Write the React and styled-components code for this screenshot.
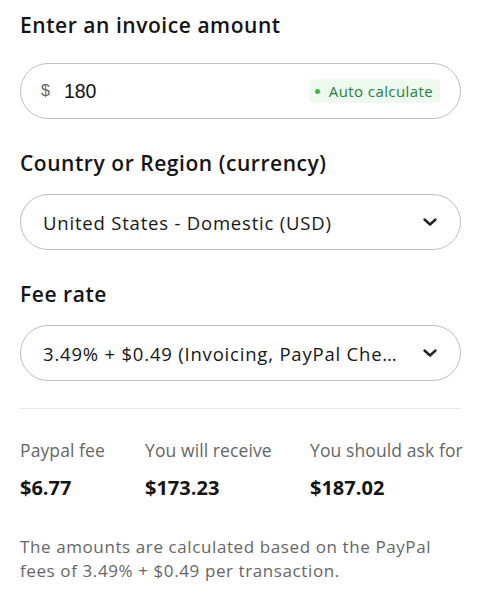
import styled, { createGlobalStyle } from "styled-components";

const GlobalStyle = createGlobalStyle`
  body {
    margin: 0;
    background: #fff;
    font-family: "Open Sans", Lato, sans-serif;
    color: #141414;
  }
`;

const Page = styled.main`
  width: 488px;
  padding: 11px 27px 0 20px;
  box-sizing: border-box;
  display: flex;
  flex-direction: column;
`;

const Field = styled.section`
  display: flex;
  flex-direction: column;
  gap: ${({ $gap }) => $gap}px;
  margin-bottom: 30px;
`;

const Label = styled.h2`
  margin: 0;
  font-size: 21px;
  font-weight: 600;
  line-height: 28px;
  letter-spacing: 0.55px;
  color: #141414;
`;

const Pill = styled.div`
  height: 56px;
  box-sizing: border-box;
  border: 1px solid #bdbdbd;
  border-radius: 28px;
  display: flex;
  align-items: center;
  padding: 0 22px 0 20px;
`;

const Currency = styled.span`
  font-family: "Liberation Sans", Arial, sans-serif;
  font-size: 16px;
  color: #666;
  margin-right: 14px;
`;

const Amount = styled.span`
  flex: 1;
  font-family: "Liberation Sans", Arial, sans-serif;
  font-size: 19.5px;
  color: #111;
`;

const Badge = styled.span`
  display: flex;
  align-items: center;
  gap: 9px;
  height: 24px;
  padding: 0 7px 0 6px;
  margin-right: -2px;
  border-radius: 4px;
  background: #eefaef;
  color: #25803a;
  font-size: 15px;
  letter-spacing: 0.4px;
  &::before {
    content: "";
    width: 5px;
    height: 5px;
    border-radius: 50%;
    background: #2dbd4a;
  }
`;

const SelectText = styled.span`
  flex: 1;
  font-size: 18.5px;
  letter-spacing: 0.8px;
  color: #161616;
  white-space: nowrap;
  overflow: hidden;
  text-overflow: ellipsis;
  padding: 0 0 0 2px;
  margin-right: 24px;
`;

const Chevron = () => (
  <svg width="16" height="16" viewBox="0 0 16 16" fill="none">
    <path
      d="M2.5 5.5 L8 10.5 L13.5 5.5"
      stroke="#222"
      strokeWidth="2.4"
      strokeLinecap="round"
      strokeLinejoin="round"
    />
  </svg>
);

const Divider = styled.hr`
  margin: -3px 0 0;
  border: 0;
  border-top: 1px solid #e8e8e8;
`;

const Results = styled.div`
  display: grid;
  grid-template-columns: 125px 165px 1fr;
  margin-top: 30px;
`;

const Stat = styled.div`
  display: flex;
  flex-direction: column;
  gap: 15px;
`;

const StatLabel = styled.span`
  font-size: 17.5px;
  letter-spacing: 0.1px;
  color: #666;
  line-height: 22px;
  white-space: nowrap;
`;

const StatValue = styled.span`
  font-size: 20px;
  font-weight: 700;
  color: #141414;
  line-height: 24px;
`;

const Note = styled.p`
  margin: 35px 0 0;
  font-size: 17px;
  line-height: 24px;
  letter-spacing: 0.6px;
  color: #666;
`;

export default function App() {
  const stats = [
    ["Paypal fee", "$6.77"],
    ["You will receive", "$173.23"],
    ["You should ask for", "$187.02"],
  ];
  return (
    <>
      <GlobalStyle />
      <Page>
        <Field $gap={24}>
          <Label>Enter an invoice amount</Label>
          <Pill>
            <Currency>$</Currency>
            <Amount>180</Amount>
            <Badge>Auto calculate</Badge>
          </Pill>
        </Field>
        <Field $gap={17}>
          <Label>Country or Region (currency)</Label>
          <Pill>
            <SelectText>United States - Domestic (USD)</SelectText>
            <Chevron />
          </Pill>
        </Field>
        <Field $gap={17}>
          <Label>Fee rate</Label>
          <Pill>
            <SelectText>3.49% + $0.49 (Invoicing, PayPal Checkout, and more)</SelectText>
            <Chevron />
          </Pill>
        </Field>
        <Divider />
        <Results>
          {stats.map(([label, value]) => (
            <Stat key={label}>
              <StatLabel>{label}</StatLabel>
              <StatValue>{value}</StatValue>
            </Stat>
          ))}
        </Results>
        <Note>
          The amounts are calculated based on the PayPal fees of 3.49% + $0.49
          per transaction.
        </Note>
      </Page>
    </>
  );
}
